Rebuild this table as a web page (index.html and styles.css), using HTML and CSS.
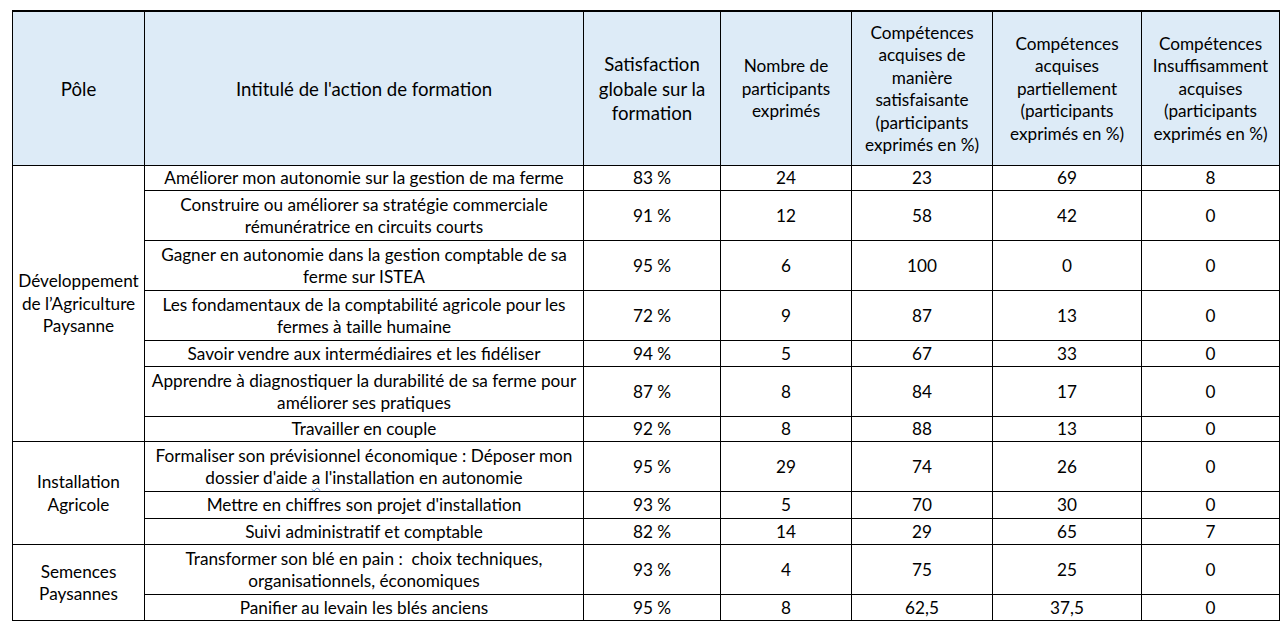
FILE: index.html
```html
<!DOCTYPE html>
<html lang="fr">
<head>
<meta charset="utf-8">
<title>Évaluation des formations</title>
<link rel="stylesheet" href="styles.css">
</head>
<body>
<table class="grid">
  <colgroup>
    <col class="c-pole">
    <col class="c-title">
    <col class="c-sat">
    <col class="c-nb">
    <col class="c-ok">
    <col class="c-part">
    <col class="c-ins">
  </colgroup>
  <thead>
    <tr class="h-head">
      <th class="big">Pôle</th>
      <th class="big">Intitulé de l'action de formation</th>
      <th class="big">Satisfaction<br>globale sur la<br>formation</th>
      <th>Nombre de<br>participants<br>exprimés</th>
      <th>Compétences<br>acquises de<br>manière<br>satisfaisante<br>(participants<br>exprimés en %)</th>
      <th>Compétences<br>acquises<br>partiellement<br>(participants<br>exprimés en %)</th>
      <th>Compétences<br>Insuffisamment<br>acquises<br>(participants<br>exprimés en %)</th>
    </tr>
  </thead>
  <tbody>
    <tr class="h25">
      <td rowspan="7">Développement<br>de l’Agriculture<br>Paysanne</td>
      <td>Améliorer mon autonomie sur la gestion de ma ferme</td>
      <td>83 %</td><td>24</td><td>23</td><td>69</td><td>8</td>
    </tr>
    <tr class="h50">
      <td>Construire ou améliorer sa stratégie commerciale<br>rémunératrice en circuits courts</td>
      <td>91 %</td><td>12</td><td>58</td><td>42</td><td>0</td>
    </tr>
    <tr class="h50">
      <td>Gagner en autonomie dans la gestion comptable de sa<br>ferme sur ISTEA</td>
      <td>95 %</td><td>6</td><td>100</td><td>0</td><td>0</td>
    </tr>
    <tr class="h50">
      <td>Les fondamentaux de la comptabilité agricole pour les<br>fermes à taille humaine</td>
      <td>72 %</td><td>9</td><td>87</td><td>13</td><td>0</td>
    </tr>
    <tr class="h26">
      <td>Savoir vendre aux intermédiaires et les fidéliser</td>
      <td>94 %</td><td>5</td><td>67</td><td>33</td><td>0</td>
    </tr>
    <tr class="h50">
      <td>Apprendre à diagnostiquer la durabilité de sa ferme pour<br>améliorer ses pratiques</td>
      <td>87 %</td><td>8</td><td>84</td><td>17</td><td>0</td>
    </tr>
    <tr class="h25">
      <td>Travailler en couple</td>
      <td>92 %</td><td>8</td><td>88</td><td>13</td><td>0</td>
    </tr>
    <tr class="h50">
      <td rowspan="3">Installation<br>Agricole</td>
      <td>Formaliser son prévisionnel économique : Déposer mon<br>dossier d'aide <span class="squiggle">a</span> l'installation en autonomie</td>
      <td>95 %</td><td>29</td><td>74</td><td>26</td><td>0</td>
    </tr>
    <tr class="h27">
      <td>Mettre en chiffres son projet d'installation</td>
      <td>93 %</td><td>5</td><td>70</td><td>30</td><td>0</td>
    </tr>
    <tr class="h26">
      <td>Suivi administratif et comptable</td>
      <td>82 %</td><td>14</td><td>29</td><td>65</td><td>7</td>
    </tr>
    <tr class="h50">
      <td rowspan="2">Semences<br>Paysannes</td>
      <td>Transformer son blé en pain :&nbsp; choix techniques,<br>organisationnels, économiques</td>
      <td>93 %</td><td>4</td><td>75</td><td>25</td><td>0</td>
    </tr>
    <tr class="h26">
      <td>Panifier au levain les blés anciens</td>
      <td>95 %</td><td>8</td><td>62,5</td><td>37,5</td><td>0</td>
    </tr>
  </tbody>
</table>
</body>
</html>
```

FILE: styles.css
```css
html, body {
  margin: 0;
  padding: 0;
  background: #ffffff;
}

body {
  padding: 10px 0 0 12px;
  font-family: Lato, "Liberation Sans", sans-serif;
  color: #000000;
}

.grid {
  table-layout: fixed;
  width: 1268px;
  border-collapse: separate;
  border-spacing: 0;
  border-top: 2px solid #000;
  border-left: 1px solid #000;
}

.c-pole { width: 132px; }
.c-title { width: 439px; }
.c-sat { width: 137px; }
.c-nb { width: 131px; }
.c-ok { width: 141px; }
.c-part { width: 149px; }
.c-ins { width: 138px; }

.grid th,
.grid td {
  box-sizing: border-box;
  padding: 1px 4px 0;
  border-right: 1px solid #000;
  border-bottom: 1px solid #000;
  text-align: center;
  vertical-align: middle;
  font-weight: normal;
  font-size: 17.2px;
  line-height: 22.5px;
  white-space: nowrap;
  overflow: visible;
}

.grid thead th {
  background: #ddebf7;
  height: 154px;
}

.grid thead th.big {
  font-size: 18.6px;
  line-height: 24.5px;
}

.h25 td { height: 25px; }
.h26 td { height: 26px; }
.h27 td { height: 27px; }
.h50 td { height: 50px; }

.squiggle {
  text-decoration: underline wavy #5b8bd6;
  text-decoration-thickness: 1px;
  text-underline-offset: 3px;
}
```
